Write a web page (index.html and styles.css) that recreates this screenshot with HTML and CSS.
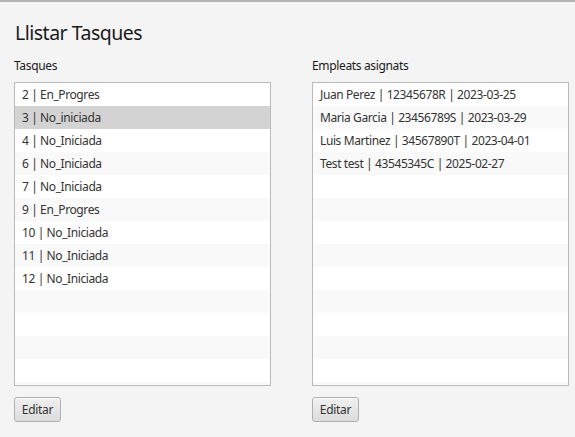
FILE: index.html
```html
<!DOCTYPE html>
<html>
<head>
<meta charset="utf-8">
<link rel="stylesheet" href="styles.css">
</head>
<body>
<div class="window">
  <h1 class="title">Llistar Tasques</h1>
  <div class="columns">
    <section class="col">
      <div class="label">Tasques</div>
      <ul class="list">
        <li>2 | En_Progres</li>
        <li class="selected">3 | No_iniciada</li>
        <li>4 | No_Iniciada</li>
        <li>6 | No_Iniciada</li>
        <li>7 | No_Iniciada</li>
        <li>9 | En_Progres</li>
        <li>10 | No_Iniciada</li>
        <li>11 | No_Iniciada</li>
        <li>12 | No_Iniciada</li>
        <li></li><li></li><li></li><li></li><li></li>
      </ul>
      <button class="btn">Editar</button>
    </section>
    <section class="col">
      <div class="label">Empleats asignats</div>
      <ul class="list">
        <li>Juan Perez | 12345678R | 2023-03-25</li>
        <li>Maria Garcia | 23456789S | 2023-03-29</li>
        <li>Luis Martinez | 34567890T | 2023-04-01</li>
        <li>Test test | 43545345C | 2025-02-27</li>
        <li></li><li></li><li></li><li></li><li></li>
        <li></li><li></li><li></li><li></li><li></li>
      </ul>
      <button class="btn">Editar</button>
    </section>
  </div>
</div>
</body>
</html>
```
FILE: styles.css
```css
html, body {
  margin: 0;
  padding: 0;
  height: 100%;
  background: #f4f4f4;
}
body {
  font-family: "Noto Sans", "Open Sans", sans-serif;
  color: #333333;
  overflow: hidden;
}
.window {
  border-top: 2px solid #b4b4b4;
  height: 100%;
  box-sizing: border-box;
  padding: 0 0 0 14px;
}
.title {
  margin: 0;
  padding-top: 17px;
  font-size: 19.5px;
  letter-spacing: -0.5px;
  font-weight: normal;
  line-height: 27px;
  color: #1a1a1a;
  padding-left: 1px;
}
.columns {
  display: grid;
  grid-template-columns: 257px 257px;
  column-gap: 41px;
  margin-top: 12px;
}
.col {
  display: flex;
  flex-direction: column;
  align-items: flex-start;
}
.label {
  font-size: 12px;
  letter-spacing: -0.35px;
  line-height: 16px;
  color: #1a1a1a;
  margin-bottom: 8px;
}
.list {
  list-style: none;
  margin: 0;
  padding: 0;
  width: 257px;
  height: 304px;
  box-sizing: border-box;
  border: 1px solid #bababa;
  background: #ffffff;
  overflow: hidden;
}
.list li {
  height: 23px;
  line-height: 23px;
  font-size: 12px;
  letter-spacing: -0.4px;
  padding-left: 7px;
  background: #ffffff;
  white-space: nowrap;
}
.list li:nth-child(even) {
  background: #f9f9f9;
}
.list li.selected {
  background: #d3d3d3;
}
.btn {
  margin-top: 11px;
  width: 47px;
  height: 25px;
  padding: 0;
  font-family: inherit;
  font-size: 12px;
  letter-spacing: -0.3px;
  color: #333333;
  border: 1px solid #b0b0b0;
  border-radius: 3px;
  background: linear-gradient(#f0f0f0, #dcdcdc);
  box-shadow: inset 0 1px 0 #fbfbfb;
}
```
